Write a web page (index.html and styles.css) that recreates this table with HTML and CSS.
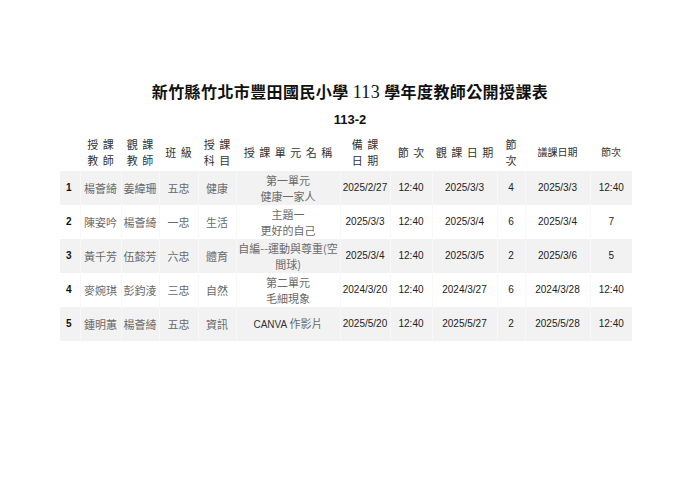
FILE: index.html
```html
<!DOCTYPE html>
<html lang="zh-Hant">
<head>
<meta charset="utf-8">
<title>新竹縣竹北市豐田國民小學 113 學年度教師公開授課表</title>
<link rel="stylesheet" href="styles.css">
</head>
<body>
<div class="page">
  <h1 class="title">新竹縣竹北市豐田國民小學 <span class="year">113</span> 學年度教師公開授課表</h1>
  <h2 class="term">113-2</h2>
  <table class="schedule">
    <colgroup>
      <col class="c0"><col class="c1"><col class="c2"><col class="c3"><col class="c4"><col class="c5">
      <col class="c6"><col class="c7"><col class="c8"><col class="c9"><col class="c10"><col class="c11">
    </colgroup>
    <thead>
      <tr>
        <th></th>
        <th>授 課<br>教 師</th>
        <th>觀 課<br>教 師</th>
        <th>班 級</th>
        <th>授 課<br>科 目</th>
        <th>授 課 單 元 名 稱</th>
        <th>備 課<br>日 期</th>
        <th>節 次</th>
        <th>觀 課 日 期</th>
        <th>節<br>次</th>
        <th class="tight">議課日期</th>
        <th class="tight">節次</th>
      </tr>
    </thead>
    <tbody>
      <tr class="shade">
        <td class="num">1</td><td class="zh">楊薈綺</td><td class="zh">姜緯珊</td><td class="zh">五忠</td><td class="zh">健康</td>
        <td class="zh">第一單元<br>健康一家人</td><td>2025/2/27</td><td>12:40</td><td>2025/3/3</td><td>4</td><td>2025/3/3</td><td>12:40</td>
      </tr>
      <tr>
        <td class="num">2</td><td class="zh">陳姿吟</td><td class="zh">楊薈綺</td><td class="zh">一忠</td><td class="zh">生活</td>
        <td class="zh">主題一<br>更好的自己</td><td>2025/3/3</td><td>12:40</td><td>2025/3/4</td><td>6</td><td>2025/3/4</td><td>7</td>
      </tr>
      <tr class="shade">
        <td class="num">3</td><td class="zh">黃千芳</td><td class="zh">伍懿芳</td><td class="zh">六忠</td><td class="zh">體育</td>
        <td class="zh">自編--運動與尊重(空<br>間球)</td><td>2025/3/4</td><td>12:40</td><td>2025/3/5</td><td>2</td><td>2025/3/6</td><td>5</td>
      </tr>
      <tr>
        <td class="num">4</td><td class="zh">麥婉琪</td><td class="zh">彭鈞淩</td><td class="zh">三忠</td><td class="zh">自然</td>
        <td class="zh">第二單元<br>毛細現象</td><td>2024/3/20</td><td>12:40</td><td>2024/3/27</td><td>6</td><td>2024/3/28</td><td>12:40</td>
      </tr>
      <tr class="shade">
        <td class="num">5</td><td class="zh">鍾明蕙</td><td class="zh">楊薈綺</td><td class="zh">五忠</td><td class="zh">資訊</td>
        <td class="zh"><span class="latin">CANVA</span> 作影片</td><td>2025/5/20</td><td>12:40</td><td>2025/5/27</td><td>2</td><td>2025/5/28</td><td>12:40</td>
      </tr>
    </tbody>
  </table>
</div>
</body>
</html>
```

FILE: styles.css
```css
html, body {
  margin: 0;
  padding: 0;
  background: #ffffff;
}

.page {
  width: 700px;
  height: 495px;
  padding-top: 79px;
  box-sizing: border-box;
}

.title {
  margin: 0;
  text-align: center;
  font-family: "Noto Sans CJK TC", "DejaVu Serif", serif;
  font-size: 16px;
  font-weight: 700;
  line-height: 24px;
  color: #111;
  letter-spacing: 0.4px;
}

.title .year {
  font-family: "Liberation Serif", "Times New Roman", serif;
  font-size: 18px;
  font-weight: 400;
}

.term {
  margin: 5px 0 0 0;
  text-align: center;
  font-family: "Liberation Sans", Arial, sans-serif;
  font-size: 13px;
  font-weight: 700;
  line-height: 22px;
  color: #111;
}

.schedule {
  margin: 2px 0 0 60px;
  width: 572px;
  border-collapse: collapse;
  table-layout: fixed;
  font-family: "Liberation Sans", "Noto Sans CJK TC", Arial, sans-serif;
  font-size: 10px;
  color: #222;
}

.c0 { width: 20px; }
.c1 { width: 41px; }
.c2 { width: 38px; }
.c3 { width: 39px; }
.c4 { width: 38px; }
.c5 { width: 104px; }
.c6 { width: 50px; }
.c7 { width: 42px; }
.c8 { width: 65px; }
.c9 { width: 28px; }
.c10 { width: 65px; }
.c11 { width: 42px; }

.schedule th {
  height: 38px;
  padding: 0;
  font-family: "Noto Sans CJK TC", sans-serif;
  font-size: 11px;
  font-weight: 400;
  line-height: 16px;
  color: #333;
  text-align: center;
  vertical-align: middle;
  word-spacing: 2px;
}

.schedule th.tight {
  font-size: 10px;
}

.schedule td {
  height: 34px;
  padding: 0;
  text-align: center;
  vertical-align: middle;
  line-height: 16px;
  border-left: 1px solid #f8f8f8;
}

.schedule td:first-child {
  border-left: none;
}

.schedule tr.shade td {
  background: #f2f2f2;
}

.schedule td.num {
  font-weight: 700;
  color: #111;
  text-align: left;
  padding-left: 6px;
}

.schedule td.zh {
  font-family: "Noto Sans CJK TC", sans-serif;
  font-size: 11px;
  color: #6a6a6a;
}

.latin {
  font-family: "Liberation Sans", Arial, sans-serif;
  font-size: 10px;
  color: #333;
}
```
